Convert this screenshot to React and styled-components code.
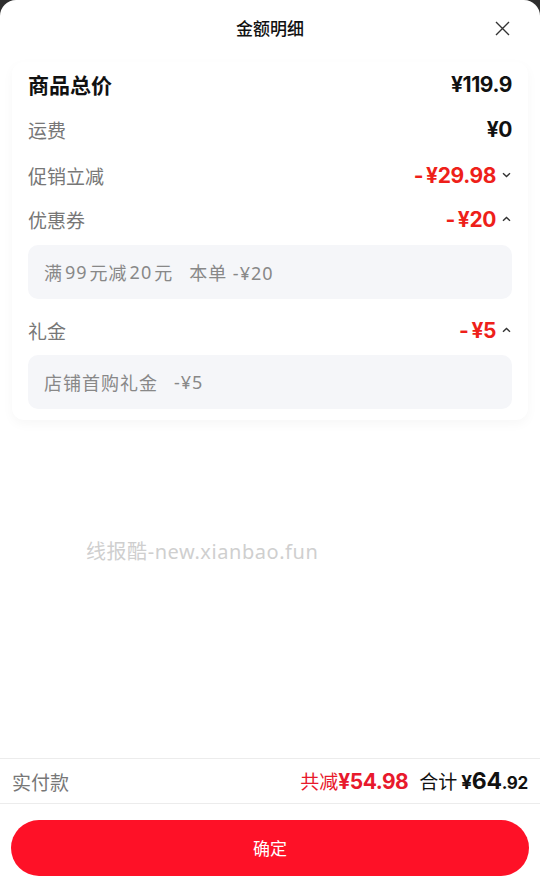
import React from 'react';
import styled, { createGlobalStyle } from 'styled-components';

const GlobalStyle = createGlobalStyle`
  html, body {
    margin: 0;
    padding: 0;
    background: #2e2e2e;
  }
  body {
    font-family: 'Noto Sans CJK SC', 'Noto Sans', sans-serif;
  }
`;

const Sheet = styled.div`
  display: flex;
  flex-direction: column;
  height: 881px;
  background: #fff;
  border-radius: 16px 16px 0 0;
  overflow: hidden;
`;

const Header = styled.div`
  position: relative;
  height: 58px;
  padding-bottom: 4px;
  box-sizing: border-box;
  display: flex;
  align-items: center;
  justify-content: center;
  flex-shrink: 0;
`;

const Title = styled.div`
  font-size: 17px;
  font-weight: 500;
  color: #111;
`;

const CloseButton = styled.button`
  position: absolute;
  right: 30px;
  top: 21px;
  width: 15px;
  height: 15px;
  padding: 0;
  border: 0;
  background: none;
  display: flex;
`;

const Card = styled.div`
  margin: 4px 12px 0;
  padding: 0 16px 11px;
  background: #fff;
  border-radius: 12px;
  box-shadow: 0 4px 12px rgba(0, 0, 0, 0.035);
  flex-shrink: 0;
`;

const Row = styled.div`
  display: flex;
  align-items: center;
  justify-content: space-between;
  height: ${p => p.$h}px;
  margin-top: ${p => p.$mt || 0}px;
`;

const Label = styled.div`
  font-size: ${p => (p.$main ? 21 : 19)}px;
  font-weight: ${p => (p.$main ? 700 : 400)};
  color: ${p => (p.$main ? '#111' : '#777')};
`;

const Amount = styled.div`
  display: flex;
  align-items: center;
  font-family: 'Inter', 'Noto Sans', sans-serif;
  font-size: 21px;
  font-weight: 700;
  color: ${p => (p.$red ? '#ee1f1a' : '#111')};
  letter-spacing: -0.4px;
`;

const Minus = styled.span`
  margin-right: 3px;
`;

const Chevron = styled.svg`
  width: 9px;
  height: 6px;
  margin-left: 6px;
  margin-right: 1px;
`;

const Detail = styled.div`
  margin-top: ${p => p.$mt}px;
  height: 54px;
  display: flex;
  align-items: center;
  padding: 0 16px;
  background: #f5f6f9;
  border-radius: 10px;
  font-family: 'Noto Sans', 'Noto Sans CJK SC', sans-serif;
  font-size: 18px;
  letter-spacing: 1px;
  color: #888;
`;

const Num = styled.span`
  margin: 0 2px;
`;

const Gap = styled.span`
  display: inline-block;
  width: ${p => p.$w}px;
`;

const Spacer = styled.div`
  flex: 1;
  padding: 116px 0 0 86px;
`;

const Watermark = styled.div`
  font-family: 'Noto Sans', 'Noto Sans CJK SC', sans-serif;
  font-size: 20px;
  letter-spacing: 0.55px;
  color: #cfcfcf;
`;

const Footer = styled.div`
  height: 44px;
  display: flex;
  align-items: center;
  justify-content: space-between;
  padding: 0 12px;
  border-top: 1px solid #ececec;
  border-bottom: 1px solid #ececec;
  flex-shrink: 0;
`;

const PayLabel = styled.div`
  font-size: 19px;
  color: #777;
`;

const Totals = styled.div`
  display: flex;
  align-items: baseline;
`;

const Saved = styled.span`
  color: #e8192c;
  font-size: 19px;
  margin-right: 11px;
`;

const SavedNum = styled.span`
  font-family: 'Inter', 'Noto Sans', sans-serif;
  font-size: 21px;
  font-weight: 700;
  letter-spacing: -0.5px;
`;

const SumLabel = styled.span`
  font-size: 19px;
  color: #111;
  margin-right: 4px;
`;

const SumNum = styled.span`
  font-family: 'Inter', 'Noto Sans', sans-serif;
  font-weight: 700;
  color: #111;
  font-size: ${p => p.$size}px;
  letter-spacing: -0.3px;
`;

const ButtonBar = styled.div`
  padding: 16px 11px 5px;
  flex-shrink: 0;
`;

const Confirm = styled.button`
  width: 100%;
  height: 56px;
  border: 0;
  border-radius: 28px;
  background: #fe1127;
  color: #fff;
  font-family: 'Noto Sans CJK SC', sans-serif;
  font-size: 17px;
  padding-bottom: 2px;
`;

const Down = () => (
  <Chevron viewBox="0 0 9 6">
    <path d="M1 1.2 L4.5 4.6 L8 1.2" fill="none" stroke="#333" strokeWidth="1.4" />
  </Chevron>
);

const Up = () => (
  <Chevron viewBox="0 0 9 6">
    <path d="M1 4.8 L4.5 1.4 L8 4.8" fill="none" stroke="#333" strokeWidth="1.4" />
  </Chevron>
);

export default function App() {
  return (
    <>
      <GlobalStyle />
      <Sheet>
        <Header>
          <Title>金额明细</Title>
          <CloseButton aria-label="关闭">
            <svg width="15" height="15" viewBox="0 0 15 15">
              <path d="M1 1 L14 14 M14 1 L1 14" stroke="#333" strokeWidth="1.4" />
            </svg>
          </CloseButton>
        </Header>

        <Card>
          <Row $h={44}>
            <Label $main>商品总价</Label>
            <Amount>¥119.9</Amount>
          </Row>
          <Row $h={46}>
            <Label>运费</Label>
            <Amount>¥0</Amount>
          </Row>
          <Row $h={46}>
            <Label>促销立减</Label>
            <Amount $red><Minus>-</Minus>¥29.98<Down /></Amount>
          </Row>
          <Row $h={42}>
            <Label>优惠券</Label>
            <Amount $red><Minus>-</Minus>¥20<Up /></Amount>
          </Row>
          <Detail $mt={5}>
            满<Num>99</Num>元减<Num>20</Num>元<Gap $w={16} />本单 -¥20
          </Detail>
          <Row $h={42} $mt={10}>
            <Label>礼金</Label>
            <Amount $red><Minus>-</Minus>¥5<Up /></Amount>
          </Row>
          <Detail $mt={4}>
            店铺首购礼金<Gap $w={16} />-¥5
          </Detail>
        </Card>

        <Spacer>
          <Watermark>线报酷-new.xianbao.fun</Watermark>
        </Spacer>

        <Footer>
          <PayLabel>实付款</PayLabel>
          <Totals>
            <Saved>共减<SavedNum>¥54.98</SavedNum></Saved>
            <SumLabel>合计</SumLabel>
            <SumNum $size={19}>¥</SumNum>
            <SumNum $size={23}>64</SumNum>
            <SumNum $size={17}>.92</SumNum>
          </Totals>
        </Footer>

        <ButtonBar>
          <Confirm>确定</Confirm>
        </ButtonBar>
      </Sheet>
    </>
  );
}
